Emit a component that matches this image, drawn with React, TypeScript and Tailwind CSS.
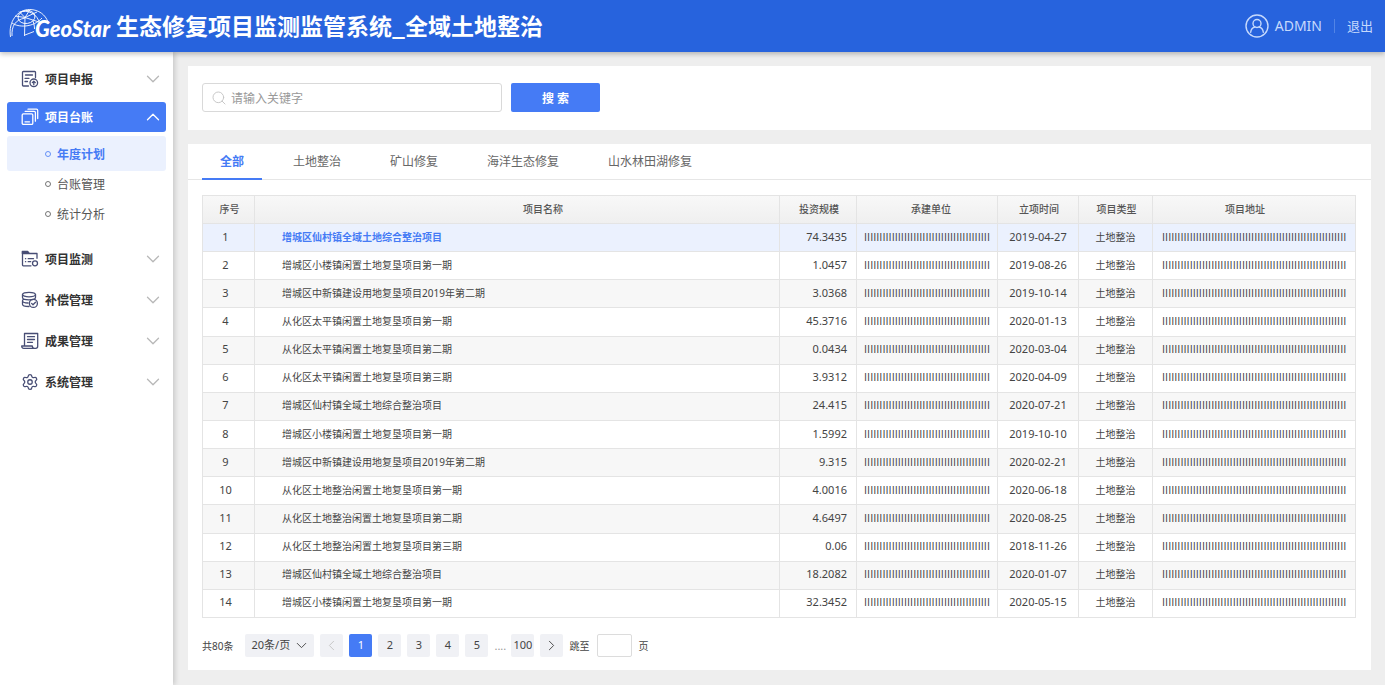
import React, { useState } from "react";
import { ChevronDown, ChevronLeft, ChevronRight, ChevronUp, Search, Settings } from "lucide-react";

const stroke = { fill: "none", stroke: "currentColor", strokeWidth: 1.3, strokeLinecap: "round", strokeLinejoin: "round" } as const;

function GlobeLogo() {
  return (
    <svg width="42" height="32" viewBox="0 0 42 32" fill="none" stroke="#fff" strokeWidth="0.9" aria-hidden="true">
      <path d="M1.500 29 C-1 13 9 1.500 20.500 1.500 C30 1.500 36.500 7 39 14" />
      <path d="M3 28 C2.500 18 6 12 16 10" />
      <ellipse cx="17.500" cy="9" rx="8.500" ry="6.500" transform="rotate(-8 17.500 9)" />
      <path d="M16 9.500 L10 3.500 M16 9.500 L21 1.500 M16 9.500 L28 4 M16 9.500 L33 15 M16 9.500 L15.500 28 M16 9.500 L6 8" />
      <path d="M3 15 C9 19.500 24 20 33 10" />
      <path d="M11 4 C18 1.500 29 5 31 17 M24 13 C25 16 25.500 18 25.500 21" />
      <path d="M16 27 L25 23.500" />
    </svg>
  );
}

function UserIcon() {
  return (
    <svg width="24" height="24" viewBox="0 0 24 24" {...stroke} strokeWidth={1.4} aria-hidden="true">
      <circle cx="12" cy="12" r="11" />
      <circle cx="12" cy="9.500" r="4" />
      <path d="M5.700 18.200c.3-3 2-4.700 4.300-5.200M18.300 18.200c-.3-3-2-4.700-4.300-5.200" />
    </svg>
  );
}

function ReportIcon() {
  return (
    <svg width="18" height="18" viewBox="0 0 18 18" {...stroke} aria-hidden="true">
      <path d="M14.500 7.500V2.300a.8.8 0 0 0-.8-.8H2.300a.8.8 0 0 0-.8.8v12.900c0 .5.3.8.8.8h5.200M4.500 5h7M4 8.300h4M4 11.500h2.500" />
      <circle cx="12.800" cy="12.800" r="3.800" />
      <path d="M12.800 14.800v-3.600M11.300 12.600l1.500-1.500 1.500 1.500" />
    </svg>
  );
}

function LedgerIcon() {
  return (
    <svg width="18" height="18" viewBox="0 0 18 18" {...stroke} aria-hidden="true">
      <rect x="1.200" y="5.800" width="10.600" height="10.600" rx="1.200" />
      <path d="M4 13.800h4.500M4.200 3.400h9c.7 0 1.200.5 1.200 1.200v8.600M7 1.200h8.500c.7 0 1.200.5 1.200 1.200v8.200" />
    </svg>
  );
}

function MonitorIcon() {
  return (
    <svg width="18" height="18" viewBox="0 0 18 18" {...stroke} aria-hidden="true">
      <path d="M1.300 1.500h5.400l1.500 1.800H1.300z" fill="currentColor" />
      <path d="M1.500 3v12c0 .4.300.8.800.8h7.700M1.500 3.500h14.500v4.800M4.500 8.700h.2M7.200 8.700h5.300M4.500 11.700h.2M7.200 11.700h2.500" />
      <circle cx="14" cy="13.300" r="2.500" />
    </svg>
  );
}

function CompensationIcon() {
  return (
    <svg width="18" height="18" viewBox="0 0 18 18" {...stroke} aria-hidden="true">
      <ellipse cx="8" cy="3.600" rx="6.500" ry="2.300" />
      <path d="M1.500 3.600v3c0 1.200 2.900 2.300 6.500 2.300s6.500-1.100 6.500-2.300v-3M2.800 8.200c-.9.400-1.300.9-1.300 1.500 0 1.200 2.500 2.200 5.600 2.300M1.500 10v3.200c0 1.200 2.800 2.300 6.500 2.300" />
      <circle cx="12.400" cy="12.400" r="4" />
      <path d="M10.600 12.400l1.400 1.400 2.500-2.600" />
    </svg>
  );
}

function ResultIcon() {
  return (
    <svg width="18" height="18" viewBox="0 0 18 18" {...stroke} aria-hidden="true">
      <path d="M3.500 13V1.500h13.200v12.800c0 1.200-.8 2-2 2H2.700c-1.300 0-2-.9-2-2.300h10.600c0 1.400.9 2.300 2.200 2.300M6.500 4.700h7M6.500 7.500h7M6.500 10.300h5" />
    </svg>
  );
}

function MenuRow({ icon, label, open = false }: { icon: React.ReactNode; label: string; open?: boolean }) {
  return (
    <button
      type="button"
      aria-expanded={open}
      className={
        open
          ? "flex h-[30px] w-full items-center gap-1.5 rounded-[3px] bg-[#457bf5] pr-0.5 pl-3.5 text-xs font-bold text-white"
          : "flex h-[30px] w-full items-center gap-1.5 rounded-[3px] pr-0.5 pl-3.5 text-xs font-bold text-[#333]"
      }
    >
      <span className={open ? "text-white" : "text-[#484e75]"}>{icon}</span>
      <span className="flex-1 pt-0.5 text-left">{label}</span>
      {open ? <ChevronUp size={22} strokeWidth={1.4} /> : <ChevronDown size={22} strokeWidth={1.4} className="text-[#b8b8b8]" />}
    </button>
  );
}

function SubItem({ label, active = false }: { label: string; active?: boolean }) {
  return (
    <li>
      <a
        href="#"
        className={
          active
            ? "flex h-[35px] items-center gap-1.5 rounded-[3px] bg-[#ebf1fe] pl-[38px] text-xs font-bold text-[#457bf5]"
            : "mb-1 flex h-[26px] items-center gap-1.5 pl-[38px] text-xs text-[#555]"
        }
      >
        <span className="size-1.5 rounded-full border border-current opacity-80" />
        <span className="pt-0.5">{label}</span>
      </a>
    </li>
  );
}

const tabs = ["全部", "土地整治", "矿山修复", "海洋生态修复", "山水林田湖修复"];

const rows: [string, string, string][] = [
  ["增城区仙村镇全域土地综合整治项目", "74.3435", "2019-04-27"],
  ["增城区小楼镇闲置土地复垦项目第一期", "1.0457", "2019-08-26"],
  ["增城区中新镇建设用地复垦项目2019年第二期", "3.0368", "2019-10-14"],
  ["从化区太平镇闲置土地复垦项目第一期", "45.3716", "2020-01-13"],
  ["从化区太平镇闲置土地复垦项目第二期", "0.0434", "2020-03-04"],
  ["从化区太平镇闲置土地复垦项目第三期", "3.9312", "2020-04-09"],
  ["增城区仙村镇全域土地综合整治项目", "24.415", "2020-07-21"],
  ["增城区小楼镇闲置土地复垦项目第一期", "1.5992", "2019-10-10"],
  ["增城区中新镇建设用地复垦项目2019年第二期", "9.315", "2020-02-21"],
  ["从化区土地整治闲置土地复垦项目第一期", "4.0016", "2020-06-18"],
  ["从化区土地整治闲置土地复垦项目第二期", "4.6497", "2020-08-25"],
  ["从化区土地整治闲置土地复垦项目第三期", "0.06", "2018-11-26"],
  ["增城区仙村镇全域土地综合整治项目", "18.2082", "2020-01-07"],
  ["增城区小楼镇闲置土地复垦项目第一期", "32.3452", "2020-05-15"],
];

const unit = "I".repeat(41);
const address = "I".repeat(60);

const pageButton = "flex h-[23px] w-[23px] items-center justify-center rounded-[2px] bg-[#f0f1f5] pb-0.5 text-[#444]";
const cell = "border border-[#e4e4e4] pb-0.5";

export default function App() {
  const [tab, setTab] = useState(0);
  return (
    <div className="flex min-h-screen flex-col bg-[#eee] font-['Noto_Sans','Noto_Sans_CJK_SC',sans-serif] text-[#444]">
      <header className="relative z-10 flex h-[52px] items-center justify-between bg-[#2763dd] pr-3 pl-[9px] shadow-[0_2px_5px_rgba(0,0,0,0.25)]">
        <div className="flex items-center pb-1">
          <GlobeLogo />
          <span className="-ml-4 self-end font-['Lato',sans-serif] text-[22px] leading-6 font-black text-white italic">GeoStar</span>
          <h1 className="ml-1.5 pt-0.5 font-['Noto_Sans_CJK_SC',sans-serif] text-[23px] leading-[32px] font-bold text-white">
            生态修复项目监测监管系统_全域土地整治
          </h1>
        </div>
        <div className="flex items-center text-[#c6d9fc]">
          <UserIcon />
          <span className="ml-1.5 text-sm">ADMIN</span>
          <span className="mx-3 h-3.5 w-px bg-[#5284e6]" />
          <button type="button" className="pt-0.5 text-[13px]">退出</button>
        </div>
      </header>

      <div className="flex flex-1">
        <nav className="flex w-[173px] shrink-0 flex-col bg-white px-[7px] pt-3 shadow-[2px_0_5px_rgba(0,0,0,0.16)]">
          <div className="flex flex-col gap-2">
            <MenuRow icon={<ReportIcon />} label="项目申报" />
            <MenuRow icon={<LedgerIcon />} label="项目台账" open />
          </div>
          <ul className="pt-1">
            <SubItem label="年度计划" active />
            <SubItem label="台账管理" />
            <SubItem label="统计分析" />
          </ul>
          <div className="flex flex-col gap-[11px] pt-[13px]">
            <MenuRow icon={<MonitorIcon />} label="项目监测" />
            <MenuRow icon={<CompensationIcon />} label="补偿管理" />
            <MenuRow icon={<ResultIcon />} label="成果管理" />
            <MenuRow icon={<Settings size={18} strokeWidth={1.7} />} label="系统管理" />
          </div>
        </nav>

        <main className="flex min-w-0 flex-1 flex-col gap-3.5 pt-3.5 pr-3.5 pb-[15px] pl-[15px]">
          <form className="flex items-center gap-[9px] bg-white px-3.5 pt-[17px] pb-[18px]" onSubmit={(e) => e.preventDefault()}>
            <label className="flex h-[29px] w-[300px] items-center gap-1 rounded-[3px] border border-[#d9d9d9] px-2">
              <Search size={16} strokeWidth={1.4} className="text-[#c4c4c4]" />
              <input
                type="text"
                aria-label="关键字"
                placeholder="请输入关键字"
                className="min-w-0 flex-1 pt-0.5 text-xs outline-none placeholder:text-[#999]"
              />
            </label>
            <button type="submit" className="h-[29px] w-[89px] rounded-[2px] bg-[#457bf5] pt-0.5 text-xs font-bold text-white">
              搜 索
            </button>
          </form>

          <section className="flex-1 bg-white">
            <div role="tablist" className="flex gap-[13px] border-b border-[#e6e6e6] px-3.5">
              {tabs.map((label, i) => (
                <button
                  key={label}
                  type="button"
                  role="tab"
                  aria-selected={i === tab}
                  onClick={() => setTab(i)}
                  className={
                    i === tab
                      ? "-mb-px h-9 border-b-2 border-[#457bf5] px-[18px] pt-0.5 text-xs font-bold text-[#457bf5]"
                      : "-mb-px h-9 border-b-2 border-transparent px-[18px] pt-0.5 text-xs text-[#666]"
                  }
                >
                  {label}
                </button>
              ))}
            </div>

            <div className="pt-[15px] pr-[15px] pl-3.5">
              <table className="h-[423px] w-full table-fixed border-collapse text-[11px] leading-4">
                <colgroup>
                  <col className="w-[52px]" />
                  <col />
                  <col className="w-[77px]" />
                  <col className="w-[141px]" />
                  <col className="w-[81px]" />
                  <col className="w-[74px]" />
                  <col className="w-[203px]" />
                </colgroup>
                <thead className="bg-linear-to-b from-[#f8f8f8] to-[#efefef] text-[10px] text-[#555]">
                  <tr className="h-7">
                    <th className={`${cell} pl-0.5 font-medium`}>序号</th>
                    <th className={`${cell} pl-[52px] font-medium`}>项目名称</th>
                    <th className={`${cell} pl-0.5 font-medium`}>投资规模</th>
                    <th className={`${cell} pl-2 font-medium`}>承建单位</th>
                    <th className={`${cell} pl-0.5 font-medium`}>立项时间</th>
                    <th className={`${cell} pl-0.5 font-medium`}>项目类型</th>
                    <th className={`${cell} pr-[18px] font-medium`}>项目地址</th>
                  </tr>
                </thead>
                <tbody>
                  {rows.map(([name, amount, date], i) => (
                    <tr key={i} className={i === 0 ? "h-7 bg-[#ebf1fe]" : i % 2 === 0 ? "h-7 bg-[#f7f7f7]" : "h-7 bg-white"}>
                      <td className={`${cell} pr-1.5 text-center`}>{i + 1}</td>
                      <td className={i === 0 ? `${cell} pl-[27px] text-[10px] font-bold text-[#457bf5]` : `${cell} pl-[27px] text-[10px]`}>{name}</td>
                      <td className={`${cell} pr-[9px] text-right`}>{amount}</td>
                      <td className={`${cell} overflow-hidden pl-[7px] font-['Open_Sans',sans-serif]`}>{unit}</td>
                      <td className={`${cell} text-center`}>{date}</td>
                      <td className={`${cell} text-center text-[10px]`}>土地整治</td>
                      <td className={`${cell} overflow-hidden pl-[9px] font-['Open_Sans',sans-serif]`}>{address}</td>
                    </tr>
                  ))}
                </tbody>
              </table>
            </div>

            <div className="flex items-center gap-1.5 px-3.5 pt-4 pb-[13px] text-[11px] leading-4">
              <span className="mr-1.5 text-[10px]">共80条</span>
              <span className="relative flex items-center">
                <select aria-label="每页条数" className="h-[23px] w-[69px] appearance-none rounded-[2px] bg-[#f0f1f5] pb-0.5 pl-1.5 text-[11px]">
                  <option>20条/页</option>
                </select>
                <ChevronDown size={17} strokeWidth={1.3} className="pointer-events-none absolute right-1" />
              </span>
              <button type="button" aria-label="上一页" disabled className="flex h-[23px] w-[23px] items-center justify-center rounded-[2px] bg-[#f0f1f5] text-[#c4c4c4]">
                <ChevronLeft size={17} strokeWidth={1.3} />
              </button>
              <button type="button" aria-current="page" className="flex h-[23px] w-[23px] items-center justify-center rounded-[2px] bg-[#457bf5] pb-0.5 text-white">
                1
              </button>
              {["2", "3", "4", "5"].map((n) => (
                <button key={n} type="button" className={pageButton}>
                  {n}
                </button>
              ))}
              <span className="w-[11px] text-[#999]">....</span>
              <button type="button" className={pageButton}>100</button>
              <button type="button" aria-label="下一页" className="flex h-[23px] w-[23px] items-center justify-center rounded-[2px] bg-[#f0f1f5] text-[#444]">
                <ChevronRight size={17} strokeWidth={1.3} />
              </button>
              <label className="flex items-center gap-1.5 text-[10px]">
                跳至
                <input type="text" className="ml-0.5 h-[23px] w-[35px] rounded-[2px] border border-[#dcdcdc] px-1 text-center outline-none" />
                页
              </label>
            </div>
          </section>
        </main>
      </div>
    </div>
  );
}
